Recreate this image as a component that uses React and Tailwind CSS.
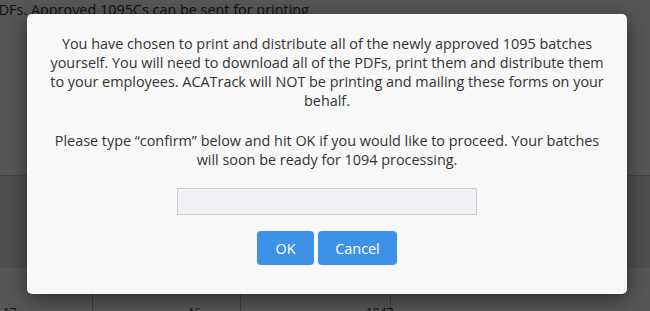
export default function App() {
  return (
    <div className="relative w-[650px] h-[311px] overflow-hidden bg-white" style={{ fontFamily: '"Open Sans", sans-serif' }}>
      {/* underlying page */}
      <div className="flex flex-col h-full">
        <div className="h-[176px] shrink-0 border-b border-[#ccc] text-[14.4px] text-[#333] leading-[19px] -ml-[10px] whitespace-nowrap">PDFs. Approved 1095Cs can be sent for printing</div>
        <div className="h-[92px] shrink-0 bg-[#e8e8e8]"></div>
        <div className="flex-1 flex text-[12px] leading-[16px] text-[#333]">
          <div className="w-[93px] border-r border-[#bbb] pl-[3px] pt-[37px]">17</div>
          <div className="w-[148px] border-r border-[#bbb] pl-[95px] pt-[37px]">16</div>
          <div className="w-[150px] border-r border-[#bbb] pl-[125px] pt-[37px]">1847</div>
          <div className="flex-1"></div>
        </div>
      </div>
      {/* overlay */}
      <div className="absolute inset-0 bg-[rgba(0,0,0,0.66)]"></div>
      {/* modal */}
      <div className="absolute left-[27px] top-[14px] w-[600px] h-[280px] bg-[#f8f8f8] rounded-[5px] shadow-[0_5px_20px_rgba(0,0,0,0.5)] flex flex-col items-center pt-[20px] text-[#333] text-[14.4px] leading-[19px]">
        <p className="w-[560px] text-center">
          You have chosen to print and distribute all of the newly approved 1095 batches yourself. You will need to download all of the PDFs, print them and distribute them to your employees. ACATrack will NOT be printing and mailing these forms on your behalf.
        </p>
        <p className="w-[560px] text-center mt-[21px]">
          Please type “confirm” below and hit OK if you would like to proceed. Your batches will soon be ready for 1094 processing.
        </p>
        <input type="text" className="mt-[19px] w-[300px] h-[27px] bg-[#f0f1f5] border border-[#ccc] outline-none" />
        <div className="flex gap-[4px] mt-[16px]">
          <button className="w-[57px] h-[34px] rounded-[4px] bg-[#3d92e8] text-white text-[14.4px]">OK</button>
          <button className="w-[79px] h-[34px] rounded-[4px] bg-[#3d92e8] text-white text-[14.4px]">Cancel</button>
        </div>
      </div>
    </div>
  );
}
